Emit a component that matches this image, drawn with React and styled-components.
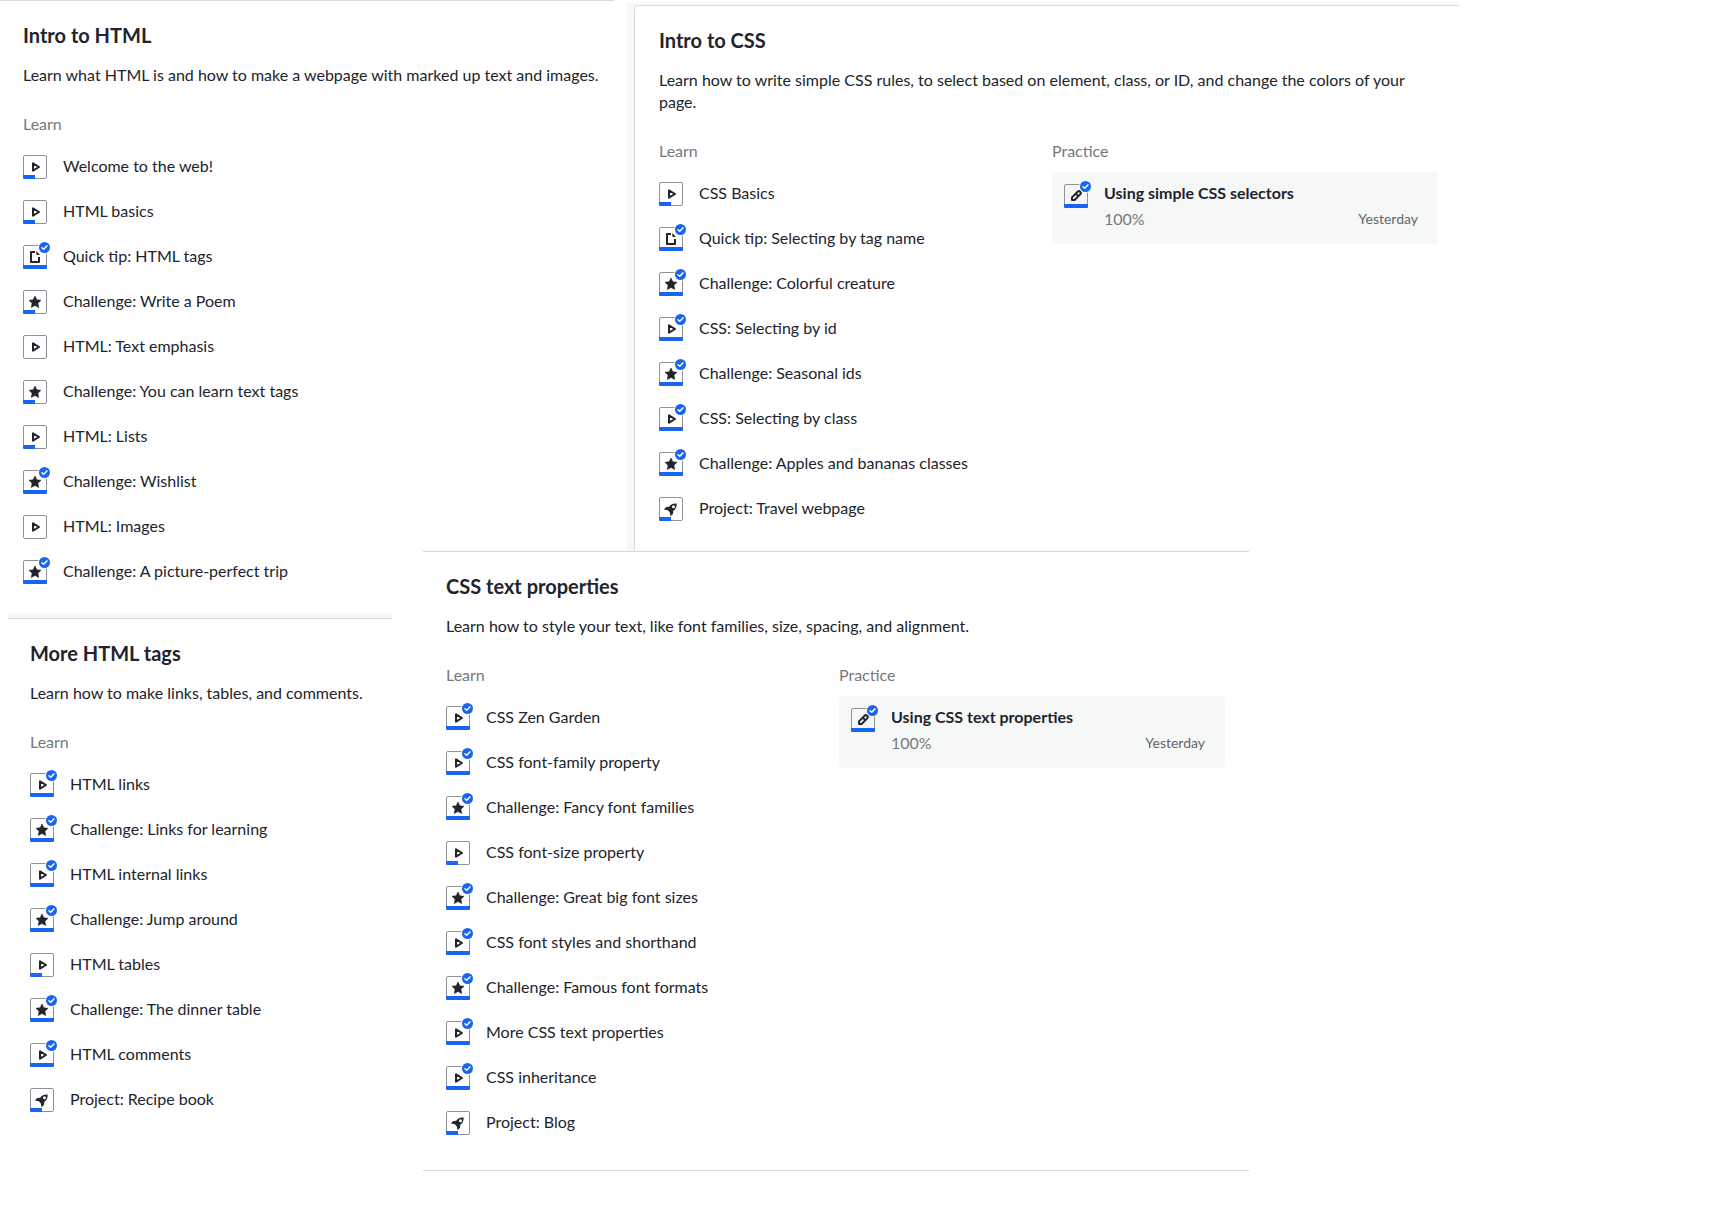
import React from "react";
import styled, { createGlobalStyle } from "styled-components";

const GlobalStyle = createGlobalStyle`
  *, *::before, *::after { box-sizing: border-box; }
  body {
    margin: 0;
    background: #fff;
    color: #21242c;
    font-family: Lato, "Noto Sans", sans-serif;
    font-size: 16px;
    line-height: 22px;
  }
  h2, h3, p, ul { margin: 0; padding: 0; }
  ul { list-style: none; }
`;

const Page = styled.main`
  display: grid;
  grid-template-columns: 423px minmax(0, 1fr);
  align-items: start;
`;

const Column = styled.div`
  display: flex;
  flex-direction: column;
`;

/* The pale page background that shows around a unit's edges */
const Gutter = styled.div`
  margin: ${(p) => p.$margin || "0"};
  padding: ${(p) => p.$edge || "0"};
  max-width: ${(p) => p.$max};
  background: #f7f8fa;
`;

const Unit = styled.section`
  padding: 22px ${(p) => p.$right || "23px"} ${(p) => (p.$closed ? "35px" : "29px")} ${(p) => p.$left || "23px"};
  background: #fff;
  border-top: 1px solid #d9dbde;
  border-left: ${(p) => (p.$sideLine ? "1px solid #d9dbde" : "0")};
  border-bottom: ${(p) => (p.$closed ? "1px solid #d9dbde" : "0")};
  border-top-left-radius: ${(p) => (p.$sideLine ? "4px" : "0")};
`;

const Title = styled.h2`
  font-size: 20px;
  line-height: 24px;
  font-weight: 700;
`;

const Summary = styled.p`
  margin-top: 17px;
`;

const Sections = styled.div`
  display: grid;
  grid-template-columns: ${(p) => (p.$split ? "repeat(2, minmax(0, 1fr))" : "minmax(0, 1fr)")};
  gap: 7px;
  align-items: start;
  margin-top: 27px;
`;

const Label = styled.h3`
  font-size: 16px;
  line-height: 22px;
  font-weight: 400;
  color: #76787d;
`;

const Lessons = styled.ul`
  display: flex;
  flex-direction: column;
  gap: 21px;
  margin-top: 20px;
`;

const LessonLink = styled.a`
  display: flex;
  align-items: center;
  gap: 16px;
  height: 24px;
  color: inherit;
  text-decoration: none;
  white-space: nowrap;
`;

const LessonName = styled.span`
  padding-bottom: 2px;
`;

const Exercise = styled.a`
  display: grid;
  grid-template-columns: 24px 1fr;
  column-gap: 16px;
  margin-top: 10px;
  padding: 10px 20px 14px 12px;
  background: #f6f8f8;
  border-radius: 4px;
  color: inherit;
  text-decoration: none;
`;

const ExerciseName = styled.strong`
  display: block;
  font-weight: 700;
`;

const Result = styled.div`
  display: flex;
  justify-content: space-between;
  margin-top: 4px;
  color: #76787d;
`;

const When = styled.span`
  font-size: 14px;
  color: #626569;
`;

const Glyph = styled.svg`
  display: block;
  flex: none;
  width: 24px;
  height: 24px;
  overflow: visible;
  margin-top: ${(p) => (p.$lowered ? "2px" : "0")};
`;

const shapes = {
  video: (
    <path d="M10 8.3v7.4l6-3.7z" fill="none" stroke="#21242c" strokeWidth="2" strokeLinejoin="round" />
  ),
  article: (
    <g>
      <path d="M12 7H8v10h8v-5" fill="none" stroke="#21242c" strokeWidth="2" strokeLinejoin="round" />
      <path d="M13.300 6l3.700 4h-2.700a1 1 0 0 1-1-1z" fill="#21242c" />
    </g>
  ),
  star: (
    <path
      d="M12 6l1.8 3.8 4.2.5-3.1 2.9.8 4.3-3.7-2.1-3.7 2.1.8-4.3L6 10.3l4.2-.5z"
      fill="#21242c"
      stroke="#21242c"
      strokeWidth=".6"
      strokeLinejoin="round"
    />
  ),
  pencil: (
    <g fill="none" stroke="#21242c" strokeWidth="2" strokeLinejoin="round">
      <path d="M8 16v-2.600l5.600-5.600a1.800 1.800 0 0 1 2.600 2.600L10.600 16z" />
      <path d="M11.800 9.600l2.600 2.600" />
    </g>
  ),
  rocket: (
    <g fill="#21242c">
      <path
        fillRule="evenodd"
        d="M17.600 6.600c-3.700-.3-6.300 1-8 4.100l-1 2.300 2.400 2.400 2.300-1c3.200-1.500 4.600-4.100 4.300-7.800zm-3.100 1.600a1.500 1.500 0 1 1 0 3 1.500 1.500 0 0 1 0-3z"
      />
      <path d="M10.300 9.700l-2.600.2c-.6.100-.9.300-1.300.8L5 12.600l3.900.6z" />
      <path d="M14.300 13.700l-.2 2.600c-.1.600-.3.900-.8 1.300L11.400 19l-.6-3.900z" />
    </g>
  ),
};

function StatusIcon({ kind, state, backdrop = "#fff", lowered }) {
  return (
    <Glyph viewBox="0 0 24 24" aria-hidden="true" $lowered={lowered}>
      <rect x=".5" y=".5" width="23" height="23" rx="1.500" fill="none" stroke="#8f9196" />
      {shapes[kind]}
      {state === "started" && <path d="M0 20h12v4H1a1 1 0 0 1-1-1z" fill="#1865f2" />}
      {state === "done" && (
        <g>
          <path d="M0 20h24v3a1 1 0 0 1-1 1H1a1 1 0 0 1-1-1z" fill="#1865f2" />
          <circle cx="21.500" cy="2.500" r="6.500" fill={backdrop} />
          <circle cx="21.500" cy="2.500" r="5.500" fill="#1865f2" />
          <path d="M19 2.700l1.700 1.600 3.200-3.400" fill="none" stroke="#fff" strokeWidth="1.500" strokeLinecap="round" strokeLinejoin="round" />
        </g>
      )}
    </Glyph>
  );
}

function LessonList({ items }) {
  return (
    <div>
      <Label>Learn</Label>
      <Lessons>
        {items.map(([name, kind, state]) => (
          <li key={name}>
            <LessonLink href="#">
              <StatusIcon kind={kind} state={state} />
              <LessonName>{name}</LessonName>
            </LessonLink>
          </li>
        ))}
      </Lessons>
    </div>
  );
}

function Practice({ name }) {
  return (
    <div>
      <Label>Practice</Label>
      <Exercise href="#">
        <StatusIcon kind="pencil" state="done" backdrop="#f6f8f8" lowered />
        <div>
          <ExerciseName>{name}</ExerciseName>
          <Result>
            <span>100%</span>
            <When>Yesterday</When>
          </Result>
        </div>
      </Exercise>
    </div>
  );
}

function UnitBody({ title, summary, items, practice }) {
  return (
    <>
      <Title>{title}</Title>
      <Summary>{summary}</Summary>
      <Sections $split={Boolean(practice)}>
        <LessonList items={items} />
        {practice && <Practice name={practice} />}
      </Sections>
    </>
  );
}

const introHtml = [
  ["Welcome to the web!", "video", "started"],
  ["HTML basics", "video", "started"],
  ["Quick tip: HTML tags", "article", "done"],
  ["Challenge: Write a Poem", "star", "started"],
  ["HTML: Text emphasis", "video", "new"],
  ["Challenge: You can learn text tags", "star", "started"],
  ["HTML: Lists", "video", "started"],
  ["Challenge: Wishlist", "star", "done"],
  ["HTML: Images", "video", "new"],
  ["Challenge: A picture-perfect trip", "star", "done"],
];

const moreHtml = [
  ["HTML links", "video", "done"],
  ["Challenge: Links for learning", "star", "done"],
  ["HTML internal links", "video", "done"],
  ["Challenge: Jump around", "star", "done"],
  ["HTML tables", "video", "started"],
  ["Challenge: The dinner table", "star", "done"],
  ["HTML comments", "video", "done"],
  ["Project: Recipe book", "rocket", "started"],
];

const introCss = [
  ["CSS Basics", "video", "started"],
  ["Quick tip: Selecting by tag name", "article", "done"],
  ["Challenge: Colorful creature", "star", "done"],
  ["CSS: Selecting by id", "video", "done"],
  ["Challenge: Seasonal ids", "star", "done"],
  ["CSS: Selecting by class", "video", "done"],
  ["Challenge: Apples and bananas classes", "star", "done"],
  ["Project: Travel webpage", "rocket", "started"],
];

const cssText = [
  ["CSS Zen Garden", "video", "done"],
  ["CSS font-family property", "video", "done"],
  ["Challenge: Fancy font families", "star", "done"],
  ["CSS font-size property", "video", "started"],
  ["Challenge: Great big font sizes", "star", "done"],
  ["CSS font styles and shorthand", "video", "done"],
  ["Challenge: Famous font formats", "star", "done"],
  ["More CSS text properties", "video", "done"],
  ["CSS inheritance", "video", "done"],
  ["Project: Blog", "rocket", "started"],
];

export default function App() {
  return (
    <>
      <GlobalStyle />
      <Page>
        <Column>
          <Gutter $margin="0 -191px 0 0">
            <Unit $right="0">
              <UnitBody
                title="Intro to HTML"
                summary="Learn what HTML is and how to make a webpage with marked up text and images."
                items={introHtml}
              />
            </Unit>
          </Gutter>
          <Gutter $margin="0 31px 0 8px" $edge="5px 0 0">
            <Unit $left="22px">
              <UnitBody
                title="More HTML tags"
                summary="Learn how to make links, tables, and comments."
                items={moreHtml}
              />
            </Unit>
          </Gutter>
        </Column>
        <Column>
          <Gutter $margin="2px 0 0 204px" $edge="3px 0 0 7px" $max="832px">
            <Unit $sideLine $left="24px" $right="21px">
              <UnitBody
                title="Intro to CSS"
                summary="Learn how to write simple CSS rules, to select based on element, class, or ID, and change the colors of your page."
                items={introCss}
                practice="Using simple CSS selectors"
              />
            </Unit>
          </Gutter>
          <Gutter $edge="1px 0 0" $max="826px">
            <Unit $closed $right="24px">
              <UnitBody
                title="CSS text properties"
                summary="Learn how to style your text, like font families, size, spacing, and alignment."
                items={cssText}
                practice="Using CSS text properties"
              />
            </Unit>
          </Gutter>
        </Column>
      </Page>
    </>
  );
}
